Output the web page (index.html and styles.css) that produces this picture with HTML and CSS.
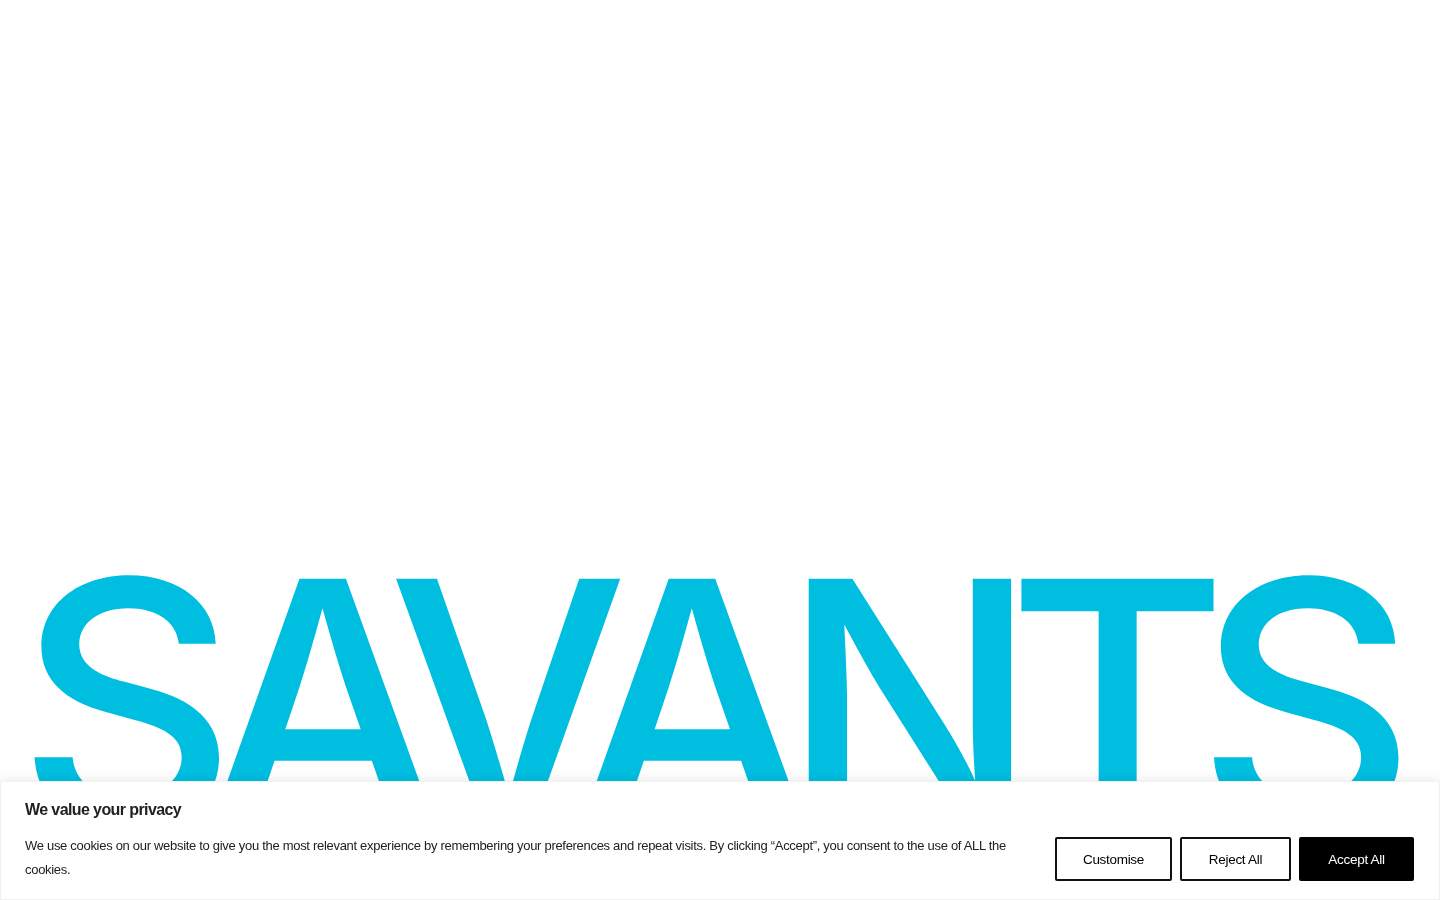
FILE: index.html
```html
<!DOCTYPE html>
<html lang="en">
<head>
<meta charset="utf-8">
<title>Savants</title>
<link rel="stylesheet" href="styles.css">
</head>
<body>
<main class="hero">
  <h1 class="wordmark">SAVANTS</h1>
</main>
<div class="cookie-bar">
  <div class="cookie-text">
    <p class="cookie-title">We value your privacy</p>
    <p class="cookie-body">We use cookies on our website to give you the most relevant experience by remembering your preferences and repeat visits. By clicking “Accept”, you consent to the use of ALL the cookies.</p>
  </div>
  <div class="cookie-actions">
    <button class="btn btn-outline btn-customise">Customise</button>
    <button class="btn btn-outline btn-reject">Reject All</button>
    <button class="btn btn-solid btn-accept">Accept All</button>
  </div>
</div>
</body>
</html>
```
FILE: styles.css
```css
html, body {
  margin: 0;
  padding: 0;
  background: #ffffff;
  height: 100%;
  overflow: hidden;
}
body {
  font-family: "Liberation Sans", Arial, sans-serif;
}
.hero {
  height: 900px;
  padding-top: 533px;
  box-sizing: border-box;
  overflow: hidden;
}
.wordmark {
  margin: 0;
  padding-left: 17px;
  font-family: Inter, "Liberation Sans", sans-serif;
  font-weight: 540;
  font-size: 340px;
  line-height: 1;
  letter-spacing: -32px;
  color: #00bee0;
  white-space: nowrap;
}
.cookie-bar {
  position: fixed;
  left: 0;
  right: 0;
  bottom: 0;
  height: 119px;
  box-sizing: border-box;
  background: #ffffff;
  border: 1px solid #f1f1f1;
  box-shadow: 0 -2px 10px rgba(0, 0, 0, 0.08);
  padding: 17px 25px 17px 24px;
  display: flex;
  align-items: flex-end;
  gap: 26px;
}
.cookie-text {
  flex: 1;
  min-width: 0;
}
.cookie-title {
  margin: 0 0 14px 0;
  font-weight: 700;
  font-size: 16px;
  line-height: 20px;
  letter-spacing: -0.6px;
  color: #212121;
}
.cookie-body {
  margin: 0;
  font-size: 13px;
  line-height: 24px;
  letter-spacing: -0.3px;
  color: #212121;
}
.cookie-actions {
  display: flex;
  gap: 8px;
  margin-bottom: 1px;
}
.btn {
  height: 44px;
  box-sizing: border-box;
  border-radius: 2px;
  font-family: "Liberation Sans", Arial, sans-serif;
  font-size: 13.5px;
  letter-spacing: -0.3px;
  cursor: pointer;
  padding: 0;
}
.btn-outline {
  background: #ffffff;
  color: #000000;
  border: 2px solid #111111;
}
.btn-solid {
  background: #000000;
  color: #ffffff;
  border: 2px solid #000000;
}
.btn-customise { width: 117px; }
.btn-reject { width: 111px; }
.btn-accept { width: 115px; }
```
